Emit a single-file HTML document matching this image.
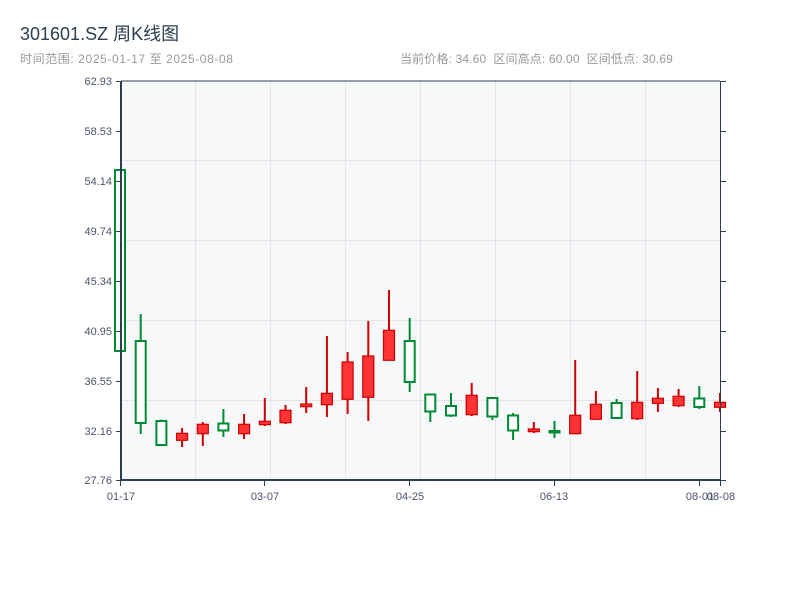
<!DOCTYPE html>
<html><head><meta charset="utf-8"><style>
body{margin:0;background:#fff;width:800px;height:600px;overflow:hidden}
svg{display:block}
text{font-family:"Liberation Sans","Noto Sans CJK SC",sans-serif}
</style></head><body>
<svg width="800" height="600" viewBox="0 0 800 600">
<text x="20" y="40" font-size="18" fill="#2c3e50">301601.SZ 周K线图</text>
<text x="20" y="63" font-size="12" fill="#999" letter-spacing="0.6">时间范围: 2025-01-17 至 2025-08-08</text>
<text x="400" y="63" font-size="12" fill="#999" letter-spacing="0.15">当前价格: 34.60&#160;&#160;区间高点: 60.00&#160;&#160;区间低点: 30.69</text>
<rect x="121" y="81" width="599" height="399" fill="#f6f8fa"/>
<g stroke="#e2e5ea" stroke-width="1">
<line x1="121" y1="160.5" x2="720" y2="160.5"/><line x1="121" y1="240.5" x2="720" y2="240.5"/>
<line x1="121" y1="320.5" x2="720" y2="320.5"/><line x1="121" y1="400.5" x2="720" y2="400.5"/>
<line x1="195.5" y1="81" x2="195.5" y2="480"/><line x1="270.5" y1="81" x2="270.5" y2="480"/>
<line x1="345.5" y1="81" x2="345.5" y2="480"/><line x1="420.5" y1="81" x2="420.5" y2="480"/>
<line x1="495.5" y1="81" x2="495.5" y2="480"/><line x1="570.5" y1="81" x2="570.5" y2="480"/>
<line x1="645.5" y1="81" x2="645.5" y2="480"/>
</g>
<!-- green candles -->
<g stroke="#008a35" stroke-width="2" fill="#fff">
<rect x="115" y="170" width="10" height="181"/>
<line x1="140.7" y1="314" x2="140.7" y2="434"/><rect x="135.7" y="341" width="10" height="82"/>
<line x1="161.4" y1="419.5" x2="161.4" y2="445"/><rect x="156.4" y="421" width="10" height="24"/>
<line x1="223.4" y1="409" x2="223.4" y2="437"/><rect x="218.4" y="423.5" width="10" height="7"/>
<line x1="409.7" y1="318" x2="409.7" y2="392"/><rect x="404.7" y="341" width="10" height="41"/>
<line x1="430.3" y1="394" x2="430.3" y2="422"/><rect x="425.3" y="394.5" width="10" height="17"/>
<line x1="451" y1="393" x2="451" y2="417"/><rect x="446" y="406" width="10" height="9.5"/>
<line x1="492.4" y1="398" x2="492.4" y2="420"/><rect x="487.4" y="398" width="10" height="18.5"/>
<line x1="513.1" y1="413" x2="513.1" y2="440"/><rect x="508.1" y="415.5" width="10" height="15"/>
<line x1="554.5" y1="421" x2="554.5" y2="438"/><rect x="549.5" y="431" width="10" height="1.5"/>
<line x1="616.6" y1="399" x2="616.6" y2="418"/><rect x="611.6" y="403" width="10" height="15"/>
<line x1="699.3" y1="386" x2="699.3" y2="409"/><rect x="694.3" y="398.5" width="10" height="8.5"/>
</g>
<!-- red candles -->
<g stroke="#cc0000" stroke-width="2">
<line x1="182.1" y1="428" x2="182.1" y2="447"/><line x1="202.8" y1="422" x2="202.8" y2="446"/><line x1="244.1" y1="414" x2="244.1" y2="439"/><line x1="264.8" y1="398" x2="264.8" y2="426"/><line x1="285.5" y1="405" x2="285.5" y2="424"/><line x1="306.2" y1="387" x2="306.2" y2="413"/><line x1="326.9" y1="336" x2="326.9" y2="417"/><line x1="347.6" y1="352" x2="347.6" y2="414"/><line x1="368.3" y1="321" x2="368.3" y2="421"/><line x1="389" y1="290" x2="389" y2="360"/><line x1="471.7" y1="383" x2="471.7" y2="416"/><line x1="533.8" y1="422" x2="533.8" y2="433"/><line x1="575.2" y1="360" x2="575.2" y2="434"/><line x1="595.9" y1="391" x2="595.9" y2="419"/><line x1="637.2" y1="371" x2="637.2" y2="420"/><line x1="657.9" y1="388" x2="657.9" y2="412"/><line x1="678.6" y1="389" x2="678.6" y2="407"/><line x1="720" y1="393" x2="720" y2="412"/>
</g>
<g stroke="#cc0000" stroke-width="1.2" fill="#ff3333">
<rect x="176.6" y="433.3" width="11" height="7"/>
<rect x="197.3" y="424.3" width="11" height="9.4"/>
<rect x="238.6" y="424.3" width="11" height="9.4"/>
<rect x="259.3" y="421.3" width="11" height="3.4"/>
<rect x="280" y="410.3" width="11" height="12.4"/>
<rect x="300.7" y="404" width="11" height="2.7"/>
<rect x="321.4" y="393.3" width="11" height="11.4"/>
<rect x="342.1" y="362" width="11" height="37.3"/>
<rect x="362.8" y="356" width="11" height="41.3"/>
<rect x="383.5" y="330.3" width="11" height="30"/>
<rect x="466.2" y="395.3" width="11" height="19.4"/>
<rect x="528.3" y="429" width="11" height="2.7"/>
<rect x="569.7" y="415.3" width="11" height="18.4"/>
<rect x="590.4" y="404.3" width="11" height="15"/>
<rect x="631.7" y="402.3" width="11" height="16.4"/>
<rect x="652.4" y="398.3" width="11" height="5"/>
<rect x="673.1" y="396.3" width="11" height="9.4"/>
<rect x="714.5" y="402.3" width="11" height="5"/>
</g>
<g stroke="#2c3e50" stroke-width="1">
<line x1="121" y1="81" x2="720" y2="81"/>
<line x1="720.5" y1="81" x2="720.5" y2="480"/>
<line x1="116" y1="81.5" x2="121" y2="81.5"/><line x1="116" y1="131.5" x2="121" y2="131.5"/><line x1="116" y1="181.5" x2="121" y2="181.5"/><line x1="116" y1="231.5" x2="121" y2="231.5"/><line x1="116" y1="281.5" x2="121" y2="281.5"/><line x1="116" y1="331.5" x2="121" y2="331.5"/><line x1="116" y1="381.5" x2="121" y2="381.5"/><line x1="116" y1="431.5" x2="121" y2="431.5"/><line x1="116" y1="480.5" x2="121" y2="480.5"/>
<line x1="720" y1="81.5" x2="726" y2="81.5"/><line x1="720" y1="131.5" x2="726" y2="131.5"/><line x1="720" y1="181.5" x2="726" y2="181.5"/><line x1="720" y1="231.5" x2="726" y2="231.5"/><line x1="720" y1="281.5" x2="726" y2="281.5"/><line x1="720" y1="331.5" x2="726" y2="331.5"/><line x1="720" y1="381.5" x2="726" y2="381.5"/><line x1="720" y1="431.5" x2="726" y2="431.5"/><line x1="720" y1="480.5" x2="726" y2="480.5"/>
<line x1="120.5" y1="480" x2="120.5" y2="486"/><line x1="264.5" y1="480" x2="264.5" y2="486"/><line x1="409.5" y1="480" x2="409.5" y2="486"/><line x1="554.5" y1="480" x2="554.5" y2="486"/><line x1="699.5" y1="480" x2="699.5" y2="486"/><line x1="720.5" y1="480" x2="720.5" y2="486"/>
</g>
<g stroke="#2c3e50" stroke-width="2">
<line x1="121" y1="81" x2="121" y2="481"/>
<line x1="120" y1="480" x2="721" y2="480"/>
</g>
<g font-size="11" fill="#4a5568" text-anchor="end">
<text x="112" y="85">62.93</text><text x="112" y="135">58.53</text><text x="112" y="185">54.14</text><text x="112" y="235">49.74</text><text x="112" y="285">45.34</text><text x="112" y="335">40.95</text><text x="112" y="385">36.55</text><text x="112" y="435">32.16</text><text x="112" y="484">27.76</text>
</g>
<g font-size="11" fill="#4a5568" text-anchor="middle">
<text x="121" y="500">01-17</text><text x="265" y="500">03-07</text><text x="410" y="500">04-25</text><text x="554" y="500">06-13</text><text x="700" y="500">08-01</text><text x="721" y="500">08-08</text>
</g>
</svg>
</body></html>
